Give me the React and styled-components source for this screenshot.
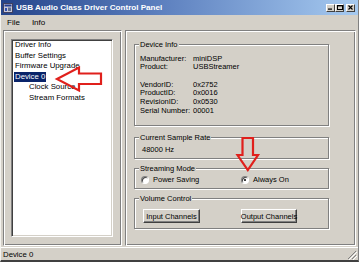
import React from 'react';
import styled, { createGlobalStyle } from 'styled-components';

const Global = createGlobalStyle`
  html, body { margin: 0; padding: 0; background: #d4d0c8; }
  body { font-family: "Liberation Sans", Arial, sans-serif; }
`;

const Window = styled.div`
  position: relative;
  width: 359px;
  height: 262px;
  box-sizing: border-box;
  background: #d4d0c8;
  display: flex;
  flex-direction: column;
  font-family: "Liberation Sans", Arial, sans-serif;
  font-size: 7.5px;
  color: #000;
  overflow: hidden;
  border-left: 1px solid #f4f3ef;
  border-right: 1px solid #808080;
  border-bottom: 2px solid #404040;
`;

const TitleBar = styled.div`
  height: 15px;
  flex: none;
  display: flex;
  align-items: center;
  padding: 0 3px 0 2px;
  background: linear-gradient(to right, #24448a 0%, #5d80bf 45%, #a6caf0 100%);
  color: #fff;
  font-weight: bold;
  font-size: 8.1px;
`;

const TitleText = styled.span`
  flex: 1;
  margin-left: 3px;
  white-space: nowrap;
`;

const CaptionButtons = styled.div`
  display: flex;
  align-items: center;
`;

const CaptionButton = styled.div`
  width: 9px;
  height: 8px;
  box-sizing: border-box;
  background: #d4d0c8;
  border: 1px solid;
  border-color: #fff #404040 #404040 #fff;
  margin-left: ${p => (p.$gap ? '2px' : '0')};
  display: flex;
  align-items: center;
  justify-content: center;
`;

const MenuBar = styled.div`
  height: 14px;
  flex: none;
  display: flex;
  align-items: center;
  padding-left: 6px;
  gap: 12px;
  font-size: 8px;
`;

const Main = styled.div`
  height: 216px;
  flex: none;
  display: flex;
  padding: 1px 2px 0 2px;
  gap: 3px;
`;

const Pane = styled.div`
  box-sizing: border-box;
  width: ${p => p.$w}px;
  height: 216px;
  border: 1px solid;
  border-color: #808080 #fff #fff #808080;
  box-shadow: inset 1px 1px 0 #fff, inset -1px -1px 0 #808080;
  display: flex;
  flex-direction: column;
`;

const LeftPane = styled(Pane)`
  padding: 8px 8px 8px 7px;
`;

const RightPane = styled(Pane)`
  padding: 13px 26px 0 8px;
`;

const ListBox = styled.div`
  flex: 1;
  background: #fff;
  border: 1px solid;
  border-color: #808080 #fff #fff #808080;
  box-shadow: inset 1px 1px 0 #404040, inset -1px -1px 0 #d4d0c8;
  padding: 0 0 0 2px;
`;

const Item = styled.div`
  height: 10.6px;
  line-height: 10.6px;
  font-size: 7.8px;
  display: flex;
  margin-left: ${p => (p.$child ? 14 : 0)}px;
`;

const ItemLabel = styled.span`
  padding: 0 1px;
  background: ${p => (p.$selected ? '#0a246a' : 'transparent')};
  color: ${p => (p.$selected ? '#fff' : '#000')};
`;

const Group = styled.div`
  position: relative;
  border: 1px solid #808080;
  box-shadow: inset 1px 1px 0 #fff, 1px 1px 0 #fff;
  margin-top: ${p => p.$mt || 0}px;
  padding: ${p => p.$pad};
`;

const Legend = styled.span`
  position: absolute;
  top: -5px;
  left: 4px;
  padding: 0 1px;
  background: #d4d0c8;
  line-height: 9px;
  white-space: nowrap;
`;

const InfoGrid = styled.div`
  display: grid;
  grid-template-columns: 53px auto;
  grid-auto-rows: 8.7px;
  line-height: 8.7px;
`;

const Spacer = styled.div`
  grid-column: 1 / span 2;
  height: 6.6px;
`;

const Line = styled.div`
  line-height: 9px;
`;

const RadioRow = styled.div`
  display: grid;
  grid-template-columns: 100px auto;
  line-height: 10px;
`;

const Radio = styled.div`
  display: flex;
  align-items: center;
  gap: 4px;
`;

const RadioCircle = styled.span`
  width: 8px;
  height: 8px;
  box-sizing: border-box;
  border-radius: 50%;
  background: #fff;
  border: 1px solid;
  border-color: #808080 #fff #fff #808080;
  box-shadow: inset 1px 1px 0 #404040;
  display: flex;
  align-items: center;
  justify-content: center;
  &::after {
    content: '';
    display: ${p => (p.$checked ? 'block' : 'none')};
    width: 2px;
    height: 2px;
    border-radius: 50%;
    background: #000;
  }
`;

const ButtonRow = styled.div`
  display: grid;
  grid-template-columns: 98px auto;
`;

const Button = styled.div`
  width: ${p => p.$w}px;
  height: 14px;
  box-sizing: border-box;
  border: 1px solid;
  border-color: #fff #404040 #404040 #fff;
  box-shadow: inset -1px -1px 0 #808080;
  display: flex;
  align-items: center;
  justify-content: center;
  white-space: nowrap;
`;

const StatusBar = styled.div`
  flex: 1;
  display: flex;
  align-items: center;
  justify-content: space-between;
  padding: 0 1px 0 2px;
  border-top: 1px solid #fff;
  margin-top: 1px;
  font-size: 7.8px;
`;

const Overlay = styled.svg`
  position: absolute;
  left: 0;
  top: 0;
  pointer-events: none;
`;

export default function App() {
  return (
    <>
      <Global />
      <Window>
        <TitleBar>
          <svg width="10" height="10" viewBox="0 0 10 10">
            <rect x="0.5" y="0.5" width="9" height="9" fill="#c8c8d8" stroke="#404060" />
            <rect x="1.5" y="1.5" width="7" height="2" fill="#203c90" />
            <rect x="2" y="5" width="2" height="3" fill="#3050b0" />
            <rect x="5" y="4.5" width="3" height="3.5" fill="#607090" />
          </svg>
          <TitleText>USB Audio Class Driver Control Panel</TitleText>
          <CaptionButtons>
            <CaptionButton>
              <svg width="5" height="5" viewBox="0 0 5 5"><rect x="0" y="3.5" width="4" height="1.2" fill="#000" /></svg>
            </CaptionButton>
            <CaptionButton>
              <svg width="6" height="5" viewBox="0 0 6 5"><rect x="0.5" y="0.5" width="5" height="4" fill="none" stroke="#000" strokeWidth="1" /><rect x="0" y="0" width="6" height="1.4" fill="#000" /></svg>
            </CaptionButton>
            <CaptionButton $gap>
              <svg width="5" height="5" viewBox="0 0 5 5"><path d="M0.5 0.5 L4.5 4.5 M4.5 0.5 L0.5 4.5" stroke="#000" strokeWidth="1.1" /></svg>
            </CaptionButton>
          </CaptionButtons>
        </TitleBar>
        <MenuBar>
          <span>File</span>
          <span>Info</span>
        </MenuBar>
        <Main>
          <LeftPane $w={119}>
            <ListBox>
              <Item><ItemLabel>Driver Info</ItemLabel></Item>
              <Item><ItemLabel>Buffer Settings</ItemLabel></Item>
              <Item><ItemLabel>Firmware Upgrade</ItemLabel></Item>
              <Item><ItemLabel $selected>Device 0</ItemLabel></Item>
              <Item $child><ItemLabel>Clock Source</ItemLabel></Item>
              <Item $child><ItemLabel>Stream Formats</ItemLabel></Item>
            </ListBox>
          </LeftPane>
          <RightPane $w={231}>
            <Group $pad="9.6px 4px 9.6px 5px">
              <Legend>Device Info</Legend>
              <InfoGrid>
                <span>Manufacturer:</span><span>miniDSP</span>
                <span>Product:</span><span>USBStreamer</span>
                <Spacer />
                <span>VendorID:</span><span>0x2752</span>
                <span>ProductID:</span><span>0x0016</span>
                <span>RevisionID:</span><span>0x0530</span>
                <span>Serial Number:</span><span>00001</span>
              </InfoGrid>
            </Group>
            <Group $mt={11} $pad="6.5px 4px 4.5px 7px">
              <Legend>Current Sample Rate</Legend>
              <Line>48000 Hz</Line>
            </Group>
            <Group $mt={9} $pad="6px 4px 3px 6px">
              <Legend>Streaming Mode</Legend>
              <RadioRow>
                <Radio><RadioCircle />Power Saving</Radio>
                <Radio><RadioCircle $checked />Always On</Radio>
              </RadioRow>
            </Group>
            <Group $mt={9} $pad="10px 4px 5px 8px">
              <Legend>Volume Control</Legend>
              <ButtonRow>
                <Button $w={57}>Input Channels</Button>
                <Button $w={56}>Output Channels</Button>
              </ButtonRow>
            </Group>
          </RightPane>
        </Main>
        <StatusBar>
          <span>Device 0</span>
          <svg width="11" height="11" viewBox="0 0 11 11">
            <path d="M10 2 L2 10 M10 6 L6 10" stroke="#808080" strokeWidth="1" />
            <path d="M11 3 L3 11 M11 7 L7 11" stroke="#fff" strokeWidth="1" />
          </svg>
        </StatusBar>
        <Overlay width="359" height="262" viewBox="0 0 359 262">
          <path d="M56 79 L78 67.5 L78 73.5 L100 73.5 L100 84 L78 84 L78 90.5 Z" fill="none" stroke="#e0201c" strokeWidth="2.2" strokeLinejoin="miter" />
          <path d="M241.5 138 L252 138 L252 155 L257 155 L246.8 170 L236.5 155 L241.5 155 Z" fill="none" stroke="#e0201c" strokeWidth="2.2" strokeLinejoin="miter" />
        </Overlay>
      </Window>
    </>
  );
}
